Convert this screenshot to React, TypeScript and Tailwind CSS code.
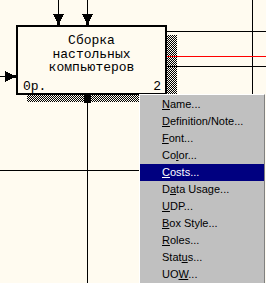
const items: { pre: string; key: string; post: string }[] = [
  { pre: "", key: "N", post: "ame..." },
  { pre: "", key: "D", post: "efinition/Note..." },
  { pre: "", key: "F", post: "ont..." },
  { pre: "Co", key: "l", post: "or..." },
  { pre: "", key: "C", post: "osts..." },
  { pre: "D", key: "a", post: "ta Usage..." },
  { pre: "", key: "U", post: "DP..." },
  { pre: "", key: "B", post: "ox Style..." },
  { pre: "", key: "R", post: "oles..." },
  { pre: "Stat", key: "u", post: "s..." },
  { pre: "UO", key: "W", post: "..." },
];

const Diagram = () => (
  <svg
    width="266"
    height="283"
    className="absolute left-0 top-0"
    shapeRendering="crispEdges"
  >
    {/* top arrows */}
    <line x1="58.5" y1="0" x2="58.5" y2="25" stroke="#000" />
    <polygon points="53,14 64,14 60,22 60,25 57,25 57,22" fill="#000" />
    <line x1="87.5" y1="0" x2="87.5" y2="25" stroke="#000" />
    <polygon points="82,14 93,14 89,22 89,25 86,25 86,22" fill="#000" />
    {/* left arrow */}
    <line x1="0" y1="76.5" x2="16" y2="76.5" stroke="#000" />
    <polygon points="5,71 5,82 13,78 16,78 16,75 13,75" fill="#000" />
    {/* right side lines */}
    <line x1="252.5" y1="0" x2="252.5" y2="94" stroke="#000" />
    <line x1="167" y1="31.5" x2="266" y2="31.5" stroke="#000" />
    <line x1="167" y1="66.5" x2="266" y2="66.5" stroke="#000" />
    {/* bottom arrow */}
    <line x1="87.5" y1="95" x2="87.5" y2="283" stroke="#000" />
    <line x1="0" y1="170.5" x2="139" y2="170.5" stroke="#000" />
  </svg>
);

export default function App() {
  return (
    <div className="relative w-[266px] h-[283px] overflow-hidden bg-[#fffbf0]">
      {/* shadow */}
      <div className="absolute left-[27px] top-[35px] w-[150px] h-[67px] bg-[repeating-conic-gradient(#000_0_25%,#fffbf0_0_50%)] bg-[length:2px_2px]" />
      <Diagram />
      <svg
        width="266"
        height="283"
        className="absolute left-0 top-0"
        shapeRendering="crispEdges"
      >
        <line x1="167" y1="56.5" x2="266" y2="56.5" stroke="#ff0000" />
        <polygon points="87,95 91,103 84,103" fill="#000" />
        <rect x="84" y="95" width="7" height="8" fill="#000" />
      </svg>
      {/* activity box */}
      <div className="absolute left-[16px] top-[25px] w-[151px] h-[70px] border-2 border-black bg-[#fffbf0] font-['Liberation_Mono',monospace] text-[13px] leading-[13.5px] text-black">
        <div className="flex flex-col items-center pt-[7px]">
          <span>Сборка</span>
          <span>настольных</span>
          <span>компьютеров</span>
        </div>
        <div className="absolute left-[5px] right-[4px] bottom-[0px] flex justify-between">
          <span>0р.</span>
          <span>2</span>
        </div>
      </div>
      {/* context menu */}
      <div className="absolute left-[139px] top-[94px] w-[126px] h-[200px] bg-[#c0c0c0] border-l border-t border-white border-r border-r-[#808080] pt-[1px] font-['Liberation_Sans',Arial,sans-serif] text-[11px]">
        {items.map((it, i) => (
          <div
            key={i}
            className={
              i === 4
                ? "h-[17px] flex items-center pl-[22px] bg-[#000080] text-white"
                : "h-[17px] flex items-center pl-[22px] text-black"
            }
          >
            <span>
              {it.pre}
              <span className="underline underline-offset-1">{it.key}</span>
              {it.post}
            </span>
          </div>
        ))}
      </div>
    </div>
  );
}
